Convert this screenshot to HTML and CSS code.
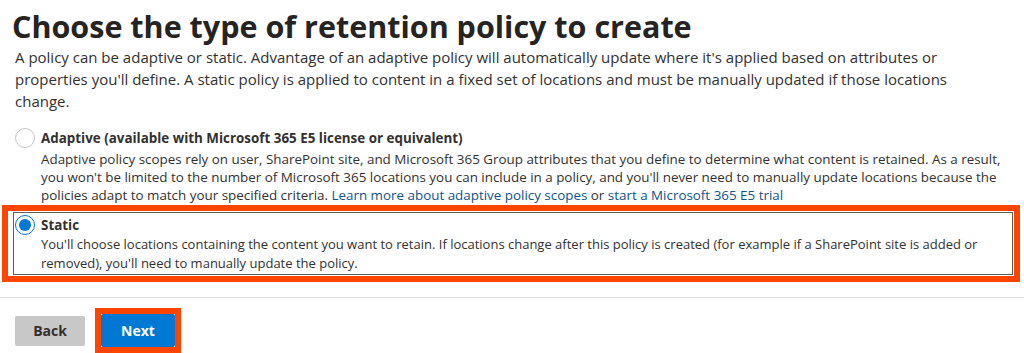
FILE: index.html
```html
<!DOCTYPE html>
<html lang="en">
<head>
    <meta charset="UTF-8">
    <meta name="viewport" content="width=device-width, initial-scale=1.0">
    <title>Retention policy</title>
    <link rel="stylesheet" href="styles.css">
</head>
<body>
    <div class="content">
        <h1>Choose the type of retention policy to create</h1>
        <p class="intro">A policy can be adaptive or static. Advantage of an adaptive policy will automatically update where it's applied based on attributes or properties you'll define. A static policy is applied to content in a fixed set of locations and must be manually updated if those locations change.</p>

        <div class="option option-adaptive">
            <span class="radio"></span>
            <div class="option-text">
                <div class="option-label">Adaptive (available with Microsoft 365 E5 license or equivalent)</div>
                <div class="option-desc">Adaptive policy scopes rely on user, SharePoint site, and Microsoft 365 Group attributes that you define to determine what content is retained. As a result, you won't be limited to the number of Microsoft 365 locations you can include in a policy, and you'll never need to manually update locations because the policies adapt to match your specified criteria. <a href="#">Learn more about adaptive policy scopes</a> or <a href="#">start a Microsoft 365 E5 trial</a></div>
            </div>
        </div>

        <div class="highlight">
            <div class="option selected">
                <span class="radio checked"></span>
                <div class="option-text">
                    <div class="option-label">Static</div>
                    <div class="option-desc">You'll choose locations containing the content you want to retain. If locations change after this policy is created (for example if a SharePoint site is added or removed), you'll need to manually update the policy.</div>
                </div>
            </div>
        </div>
    </div>

    <div class="footer">
        <button class="btn btn-back">Back</button>
        <div class="btn-highlight">
            <button class="btn btn-next">Next</button>
        </div>
    </div>
</body>
</html>
```

FILE: styles.css
```css
body {
    margin: 0;
    font-family: "Open Sans", "Noto Sans", sans-serif;
    color: #323130;
    background-color: #fff;
}
.content {
    padding: 0 4px 0 2px;
}
h1 {
    margin: 0 0 0 10px;
    padding-top: 5px;
    font-size: 30.5px;
    line-height: 42px;
    font-weight: 700;
    color: #252423;
}
.intro {
    margin: -1px 0 0 13px;
    max-width: 960px;
    font-size: 15px;
    line-height: 22px;
}
.option {
    display: flex;
    gap: 6px;
}
.option-adaptive {
    margin: 16px 0 1px;
    padding-left: 13px;
}
.radio {
    flex: none;
    width: 20px;
    height: 20px;
    border: 1px solid #c8c6c4;
    border-radius: 50%;
    box-sizing: border-box;
    position: relative;
}
.radio.checked {
    border-color: #0078d4;
}
.radio.checked::after {
    content: "";
    position: absolute;
    top: 3px;
    left: 3px;
    width: 12px;
    height: 12px;
    border-radius: 50%;
    background-color: #0078d4;
}
.option-label {
    font-size: 13.4px;
    font-weight: 700;
    line-height: 20px;
}
.option-adaptive .option-label {
    margin-bottom: 2px;
}
.option-desc {
    font-size: 13.4px;
    line-height: 18px;
    max-width: 960px;
}
.option-desc a {
    color: #0f548c;
    text-decoration: none;
}
.highlight {
    border: 6px solid #ff4500;
    padding: 1px 1px 1px 5px;
}
.option.selected {
    border: 1px solid #605e5c;
    padding: 2px 0 1px 1px;
}
.selected .option-desc {
    font-size: 13px;
    line-height: 19px;
    max-width: none;
}
.footer {
    margin-top: 15px;
    border-top: 1px solid #e1dfdd;
    display: flex;
    align-items: center;
    gap: 10px;
    padding: 10px 15px 0;
}
.btn {
    font-family: inherit;
    font-size: 14px;
    font-weight: 700;
    border: none;
    border-radius: 2px;
    cursor: pointer;
}
.btn-back {
    width: 70px;
    height: 30px;
    background-color: #c8c8c8;
    color: #323130;
}
.btn-highlight {
    border: 6px solid #ff4500;
}
.btn-next {
    width: 74px;
    height: 33px;
    background-color: #0078d4;
    color: #fff;
}
```
